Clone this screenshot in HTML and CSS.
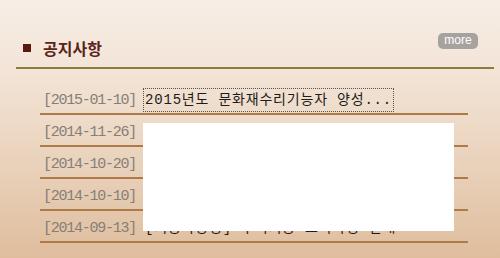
FILE: index.html
```html
<!DOCTYPE html>
<html lang="ko">
<head>
    <meta charset="UTF-8">
    <meta name="viewport" content="width=device-width, initial-scale=1.0">
    <title>공지사항</title>
    <link rel="stylesheet" href="styles.css">
</head>
<body>
    <div class="wrap">
        <div class="board-head">
            <h2 class="board-title"><span class="bullet"></span>공지사항</h2>
            <a class="more" href="#">more</a>
        </div><!--board-head-->

        <ul class="notice-list">
            <li><span class="date">[2015-01-10]</span><a class="subject focus" href="#">2015년도 문화재수리기능자 양성...</a></li>
            <li><span class="date">[2014-11-26]</span><a class="subject" href="#">문화재수리기능자 교육생 합격자 발표</a></li>
            <li><span class="date">[2014-10-20]</span><a class="subject" href="#">2014년도 전통건축 수리기술 교육 안내</a></li>
            <li><span class="date">[2014-10-10]</span><a class="subject" href="#">교육생 추가 모집 공고</a></li>
            <li><span class="date">[2014-09-13]</span><a class="subject" href="#">[기능자양성] 수리기능 교육과정 안내</a></li>
        </ul>

        <div class="cover"></div>
    </div><!--wrap-->
</body>
</html>
```

FILE: styles.css
```css
*{
    margin : 0;
    padding : 0;
}
a{
    color : inherit;
    text-decoration : none;
}
ul{
    list-style : none;
}
html, body{
    height : 100%;
}
.wrap{
    position : relative;
    height : 258px;
    overflow : hidden;
    background : linear-gradient(to bottom, #f7eee6 0%, #f2e3d5 30%, #e9d1ba 65%, #dfbd9d 100%);
}

.board-head{
    display : flex;
    align-items : flex-start;
    height : 67px;
    margin : 0 6px 0 16px;
    border-bottom : 2px solid #8a7b3f;
}
.board-title{
    display : flex;
    align-items : center;
    margin-top : 39px;
    padding-left : 7px;
    font-family : "Noto Sans CJK KR", sans-serif;
    font-size : 16px;
    line-height : 18px;
    font-weight : bold;
    color : #5b2418;
}
.bullet{
    display : block;
    width : 8px;
    height : 8px;
    margin-right : 12px;
    background-color : #5a1810;
}
.more{
    margin-left : auto;
    margin-top : 33px;
    margin-right : 16px;
    width : 40px;
    height : 16px;
    border-radius : 5px;
    background-color : #a6a39f;
    color : #fff;
    font-family : "Liberation Sans", sans-serif;
    font-size : 12px;
    line-height : 15px;
    text-align : center;
}

.notice-list{
    margin : 14px 32px 0 40px;
    font-family : "Liberation Mono", "Noto Sans CJK KR", monospace;
}
.notice-list li{
    display : flex;
    align-items : center;
    height : 26px;
    padding : 4px 0 0 3px;
    border-bottom : 2px solid #ad7a48;
    white-space : nowrap;
    overflow : hidden;
}
.date{
    font-size : 15px;
    letter-spacing : -1.25px;
    color : #848079;
    margin-right : 8px;
}
.subject{
    font-size : 14px;
    line-height : 22px;
    letter-spacing : 0.8px;
    color : #1c1c1c;
    padding : 0 1px;
}
.subject.focus{
    outline : 1px dotted #555;
}

.cover{
    position : absolute;
    left : 143px;
    top : 123px;
    width : 311px;
    height : 108px;
    background-color : #fff;
}
```
